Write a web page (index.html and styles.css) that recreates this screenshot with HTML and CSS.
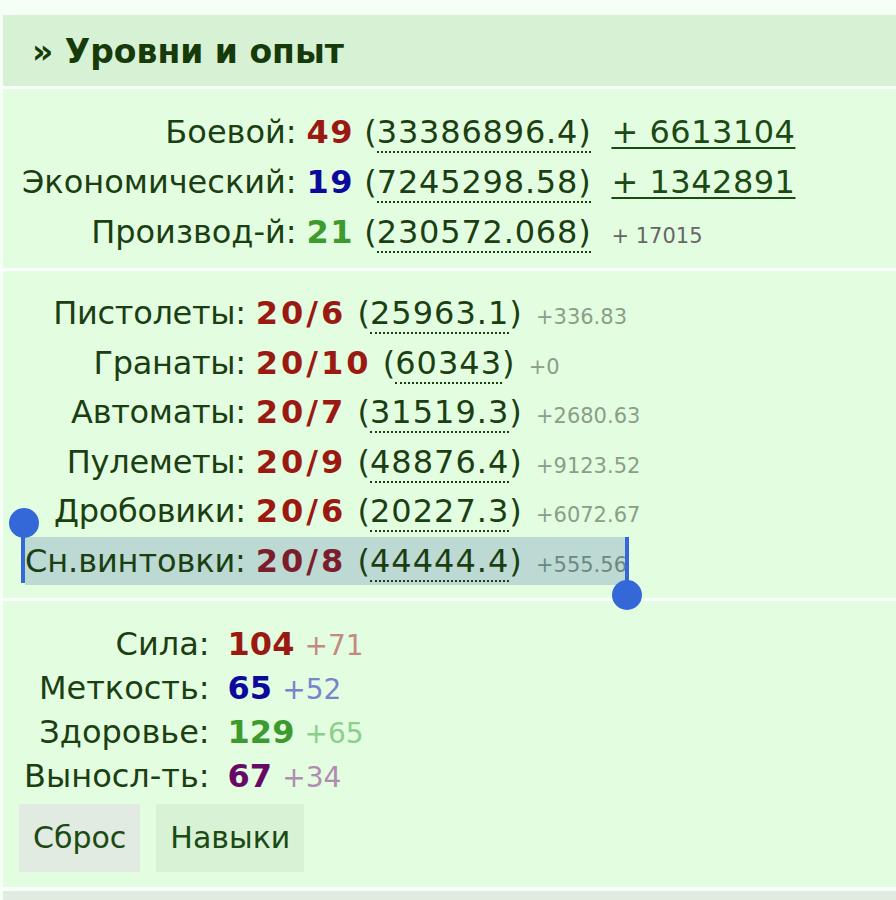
FILE: index.html
```html
<!DOCTYPE html>
<html lang="ru">
<head>
  <meta charset="UTF-8" />
  <title>Уровни и опыт</title>
  <link rel="stylesheet" href="styles.css">
</head>
<body>
  <div class="panel">
    <div class="panel-head">&raquo; Уровни и опыт</div>

    <div class="block levels">
      <table>
        <tr>
          <td class="name">Боевой:</td>
          <td class="val"><b class="c-red">49</b> (<span class="exp">33386896.4)</span></td>
          <td class="gain"><a href="#">+ 6613104</a></td>
        </tr>
        <tr>
          <td class="name">Экономический:</td>
          <td class="val"><b class="c-blue">19</b> (<span class="exp">7245298.58)</span></td>
          <td class="gain"><a href="#">+ 1342891</a></td>
        </tr>
        <tr>
          <td class="name">Производ-й:</td>
          <td class="val"><b class="c-green">21</b> (<span class="exp">230572.068)</span></td>
          <td class="gain"><small>+ 17015</small></td>
        </tr>
      </table>
    </div>

    <div class="block skills">
      <table>
        <tr>
          <td class="name">Пистолеты:</td>
          <td class="val"><b>20/6</b> (<span class="exp">25963.1</span>) <small>+336.83</small></td>
        </tr>
        <tr>
          <td class="name">Гранаты:</td>
          <td class="val"><b>20/10</b> (<span class="exp">60343</span>) <small>+0</small></td>
        </tr>
        <tr>
          <td class="name">Автоматы:</td>
          <td class="val"><b>20/7</b> (<span class="exp">31519.3</span>) <small>+2680.63</small></td>
        </tr>
        <tr>
          <td class="name">Пулеметы:</td>
          <td class="val"><b>20/9</b> (<span class="exp">48876.4</span>) <small>+9123.52</small></td>
        </tr>
        <tr>
          <td class="name">Дробовики:</td>
          <td class="val"><b>20/6</b> (<span class="exp">20227.3</span>) <small>+6072.67</small></td>
        </tr>
        <tr class="picked">
          <td class="name"><span class="sel sel-start">Сн.винтовки:</span></td>
          <td class="val"><span class="sel sel-end"><b>20/8</b> (<span class="exp">44444.4</span>) <small>+555.56</small></span></td>
        </tr>
      </table>
    </div>

    <div class="block stats">
      <table>
        <tr>
          <td class="name">Сила:</td>
          <td class="val"><b class="c-red">104</b> <span class="add add-red">+71</span></td>
        </tr>
        <tr>
          <td class="name">Меткость:</td>
          <td class="val"><b class="c-blue">65</b> <span class="add add-blue">+52</span></td>
        </tr>
        <tr>
          <td class="name">Здоровье:</td>
          <td class="val"><b class="c-green">129</b> <span class="add add-green">+65</span></td>
        </tr>
        <tr>
          <td class="name">Выносл-ть:</td>
          <td class="val"><b class="c-purple">67</b> <span class="add add-purple">+34</span></td>
        </tr>
      </table>
      <div class="actions">
        <button class="btn btn-grey">Сброс</button>
        <button class="btn">Навыки</button>
      </div>
    </div>

    <div class="next-head"></div>
  </div>
</body>
</html>
```

FILE: styles.css
```css
body { margin: 0; background: #f5fff6; font-family: "DejaVu Sans", Verdana, sans-serif; color: #1b3f12; font-size: 32px; }
.panel { margin: 15px 0 0 3px; }
.panel-head { background: #d7f1d4; height: 69px; padding: 2px 0 0 29px; line-height: 69px; font-size: 33px; font-weight: bold; color: #163a0a; }

.block { background: #e3fde1; border-top: 3px solid #fbfffb; }
table { border-collapse: collapse; }
td { padding: 0; white-space: nowrap; }
td.name { text-align: right; }
b { font-weight: bold; }
a { color: #1b4a12; text-decoration: underline; text-decoration-thickness: 2px; text-underline-offset: 4px; letter-spacing: 0.5px; }
small { line-height: 1; }

.exp { border-bottom: 2px dotted #1b3f12; letter-spacing: 0.8px; }

.c-red { color: #9a1a12; }
.c-blue { color: #0b0a9a; }
.c-green { color: #3d9a2e; }
.c-purple { color: #660a66; }

/* боевой / экономический / производственный */
.levels { height: 150px; padding: 18px 0 11px; }
.levels table { margin-left: 19px; }
.levels td { height: 50px; line-height: 50px; }
.levels td.val { padding-left: 10px; }
.levels td.gain { padding-left: 20px; }
.levels b { letter-spacing: 1.5px; }
.levels small { font-size: 21px; color: #666; }

/* оружейные навыки */
.skills { padding: 18px 0 12px; }
.skills table { margin-left: 22px; }
.skills td { height: 49.5px; line-height: 49.5px; }
.skills td.name { letter-spacing: -0.3px; }
.skills td.val { padding-left: 10px; }
.skills b { color: #9a1a12; letter-spacing: 3px; margin-right: 1px; }
.skills .exp { letter-spacing: 1px; }
.skills small { font-size: 21px; color: #8a9e88; margin-left: 4px; }

/* выделенная строка с маркерами */
.picked td.val { padding-left: 0; }
.sel { background: #bcdad3; padding: 5px 0; position: relative; }
.sel-start { letter-spacing: -0.1px; }
.sel-end { padding-left: 10px; }
.picked b { color: #7b1d2b; }
.picked small { color: #6c8882; }
.sel-start::before { content: ""; position: absolute; left: -4px; top: -14px; width: 4px; height: 60px; background: #3468d8; }
.sel-start::after { content: ""; position: absolute; left: -16px; top: -29px; width: 30px; height: 30px; border-radius: 50%; background: #3468d8; }
.sel-end::before { content: ""; position: absolute; right: -2px; top: 0; width: 4px; height: 58px; background: #3468d8; }
.sel-end::after { content: ""; position: absolute; right: -15px; top: 43px; width: 30px; height: 30px; border-radius: 50%; background: #3468d8; }

/* характеристики */
.stats { padding: 21px 0 15px; }
.stats table { margin-left: 21px; }
.stats td { height: 44px; line-height: 44px; }
.stats td.val { padding-left: 18px; }
.add { font-size: 28px; line-height: 1; }
.add-red { color: #c28a80; }
.add-blue { color: #7a84cc; }
.add-green { color: #8ad08a; }
.add-purple { color: #b08cb0; }

.actions { display: flex; gap: 16px; margin: 6px 0 0 16px; }
.btn { font: inherit; font-size: 30px; color: #1b4a12; border: none; background: #d7f2d5; padding: 16px 14px; line-height: 36px; }
.btn-grey { background: #e1ebe1; }

.next-head { background: #e1ece1; height: 40px; border-top: 4px solid #fbfffb; }
```
